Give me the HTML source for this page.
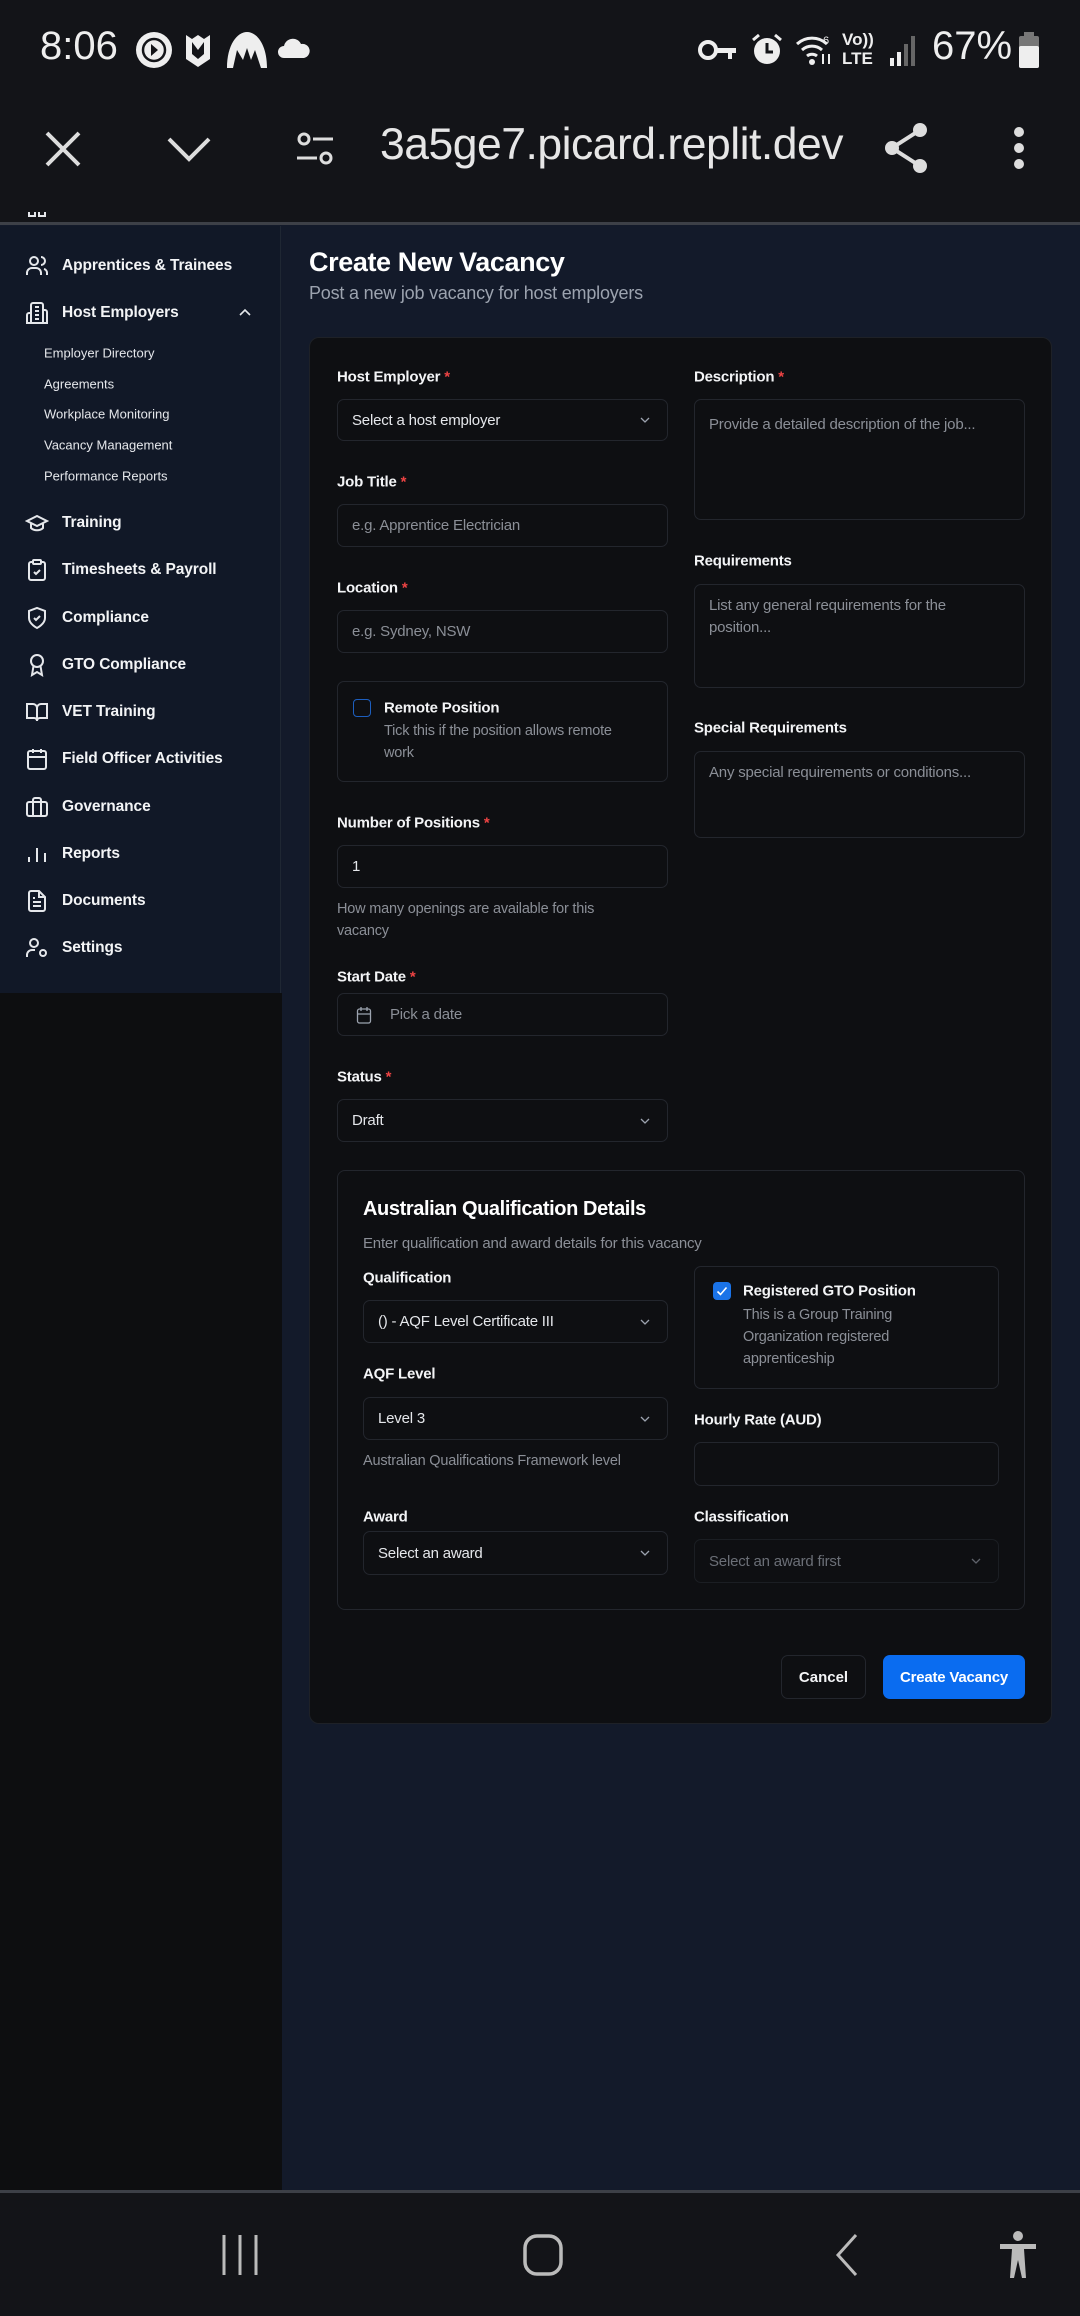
<!DOCTYPE html>
<html><head><meta charset="utf-8">
<style>
*{box-sizing:border-box;margin:0;padding:0}
body{width:1080px;height:2316px;background:#131a2a;font-family:"Liberation Sans",sans-serif;position:relative;overflow:hidden;color:#f3f4f6}
.a{position:absolute}
.status{left:0;top:0;width:1080px;height:223px;background:#131418}
.sep{left:0;width:1080px;height:3px;background:#3d4047}
.side{left:0;top:226px;width:281px;height:767px;background:#111827;border-right:1px solid #1f2733}
.below{left:0;top:993px;width:282px;height:1198px;background:#0d0e10}
.ni{position:absolute;left:62px;font-size:15.5px;font-weight:bold;color:#f3f4f6;letter-spacing:-0.1px;transform:translateY(-50%)}
.si{position:absolute;left:44px;font-size:13px;color:#e5e7eb;transform:translateY(-50%)}
.ic{position:absolute;left:25px;width:24px;height:24px;transform:translateY(-50%)}
.cv{position:absolute;left:238px;width:14px;height:14px;transform:translateY(-50%)}
.card{left:309px;top:337px;width:743px;height:1387px;background:#0e0f12;border:1px solid #1e2127;border-radius:10px}
.lb{position:absolute;font-size:15px;font-weight:bold;color:#f3f4f6;transform:translateY(-50%);letter-spacing:-0.2px}
.lb i{color:#ef4444;font-style:normal}
.in{position:absolute;border:1px solid #23262d;border-radius:7px;background:#0e0f12;font-size:15px;color:#e5e7eb;padding-left:14px;display:flex;align-items:center;letter-spacing:-0.2px}
.ph{color:#8b8f97}
.ta{align-items:flex-start;padding-top:14px;line-height:22px;padding-right:14px}
.help{position:absolute;font-size:14.5px;color:#8b8f97;line-height:22px;letter-spacing:-0.2px}
.chev{position:absolute;right:16px;top:50%;width:12px;height:12px;transform:translateY(-50%)}
</style></head><body>
<div class="a status"></div>
<div class="a" style="left:40px;top:24px;font-size:40px;color:#eee">8:06</div>
<svg class="a" style="left:134px;top:30px" width="40" height="40"><circle cx="20" cy="20" r="18" fill="#eee"/><circle cx="20" cy="20" r="11" fill="none" stroke="#131418" stroke-width="2.5"/><path d="M17 14l7 6-7 6z" fill="#131418"/></svg>
<svg class="a" style="left:184px;top:32px" width="28" height="36"><path d="M2 3l6 4 6-4 6 4 6-4v24l-12 8-12-8z" fill="#eee"/><path d="M8 10l6 8 6-8v12l-6 5-6-5z" fill="#131418"/></svg>
<svg class="a" style="left:225px;top:30px" width="44" height="40"><path d="M2 38 C2 15 12 2 22 2 C32 2 42 15 42 38 L36 38 L30 20 L26 30 L22 18 L18 30 L12 20 L8 38Z" fill="#eee"/></svg>
<svg class="a" style="left:278px;top:38px" width="32" height="22"><path d="M6 20a6 6 0 010-12 9 9 0 0117 -2 6 6 0 013 14z" fill="#eee"/></svg>
<svg class="a" style="left:698px;top:36px" width="40" height="28"><circle cx="10" cy="14" r="8" fill="none" stroke="#eee" stroke-width="4"/><path d="M18 12h20v5h-4v6h-4v-6h-12z" fill="#eee"/></svg>
<svg class="a" style="left:750px;top:32px" width="34" height="36"><circle cx="17" cy="19" r="13" fill="#eee"/><path d="M17 11v9h6" stroke="#131418" stroke-width="3" fill="none"/><path d="M3 8l6-5M31 8l-6-5" stroke="#eee" stroke-width="3"/></svg>
<svg class="a" style="left:795px;top:32px" width="40" height="36"><path d="M2 12a22 22 0 0130 0M7 18a15 15 0 0120 0M12 24a8 8 0 0110 0" stroke="#eee" stroke-width="3" fill="none"/><circle cx="17" cy="30" r="3" fill="#eee"/><text x="28" y="12" font-size="11" fill="#eee" font-family="Liberation Sans">6</text><path d="M28 22v10M34 22v10" stroke="#eee" stroke-width="2"/></svg>
<div class="a" style="left:842px;top:30px;font-size:17px;color:#eee;line-height:19px;font-weight:bold">Vo))<br>LTE</div>
<svg class="a" style="left:888px;top:34px" width="30" height="32"><rect x="2" y="24" width="4" height="8" fill="#eee"/><rect x="9" y="18" width="4" height="14" fill="#eee"/><rect x="16" y="10" width="4" height="22" fill="#666"/><rect x="23" y="2" width="4" height="30" fill="#666"/></svg>
<div class="a" style="left:932px;top:24px;font-size:40px;color:#eee">67%</div>
<svg class="a" style="left:1018px;top:32px" width="22" height="36"><rect x="6" y="0" width="10" height="4" fill="#777"/><rect x="1" y="4" width="20" height="32" rx="2" fill="#777"/><rect x="1" y="14" width="20" height="22" rx="2" fill="#eee"/></svg>

<svg class="a" style="left:44px;top:130px" width="38" height="38"><path d="M3 3l32 32M35 3L3 35" stroke="#ddd" stroke-width="4"/></svg>
<svg class="a" style="left:166px;top:136px" width="46" height="26"><path d="M3 3l20 20 20-20" stroke="#ddd" stroke-width="4" fill="none"/></svg>
<svg class="a" style="left:295px;top:131px" width="40" height="36"><circle cx="9" cy="8" r="5" stroke="#ddd" stroke-width="3" fill="none"/><path d="M18 8h20M2 27h20" stroke="#ddd" stroke-width="3"/><circle cx="31" cy="27" r="5" stroke="#ddd" stroke-width="3" fill="none"/></svg>
<div class="a" style="left:380px;top:120px;font-size:44.5px;color:#e6e6e6;letter-spacing:-0.5px">3a5ge7.picard.replit.dev</div>
<svg class="a" style="left:882px;top:120px" width="52" height="56"><circle cx="38" cy="10" r="7" fill="#ddd"/><circle cx="10" cy="28" r="7" fill="#ddd"/><circle cx="38" cy="46" r="7" fill="#ddd"/><path d="M38 10L10 28 38 46" stroke="#ddd" stroke-width="4" fill="none"/></svg>
<svg class="a" style="left:1010px;top:126px" width="18" height="46"><circle cx="9" cy="6" r="5" fill="#ddd"/><circle cx="9" cy="22" r="5" fill="#ddd"/><circle cx="9" cy="38" r="5" fill="#ddd"/></svg>
<div class="a sep" style="top:222px"></div>

<div class="a side">
<svg class="ic" style="top:-4px" viewBox="0 0 24 24"><path d="M4 2v4h6V2M14 2v4h6V2" stroke="#e5e7eb" stroke-width="2" fill="none"/></svg>
<svg class="ic" style="top:40px" viewBox="0 0 24 24" fill="none" stroke="#e5e7eb" stroke-width="2"><circle cx="9" cy="7" r="4"/><path d="M2 21v-2a5 5 0 015-5h4a5 5 0 015 5v2M16 3a4 4 0 010 8M22 21v-2a4 4 0 00-3-4"/></svg>
<div class="ni" style="top:40px">Apprentices &amp; Trainees</div>
<svg class="ic" style="top:87px" viewBox="0 0 24 24" fill="none" stroke="#e5e7eb" stroke-width="2"><path d="M6 22V4a2 2 0 012-2h8a2 2 0 012 2v18zM6 12H4a2 2 0 00-2 2v8h4M18 9h2a2 2 0 012 2v11h-4M10 6h4M10 10h4M10 14h4M10 18h4"/></svg>
<div class="ni" style="top:87px">Host Employers</div>
<svg class="cv" style="top:87px" viewBox="0 0 14 14"><path d="M2 9l5-5 5 5" stroke="#e5e7eb" stroke-width="1.6" fill="none"/></svg>
<div class="si" style="top:127px">Employer Directory</div>
<div class="si" style="top:158px">Agreements</div>
<div class="si" style="top:188px">Workplace Monitoring</div>
<div class="si" style="top:219px">Vacancy Management</div>
<div class="si" style="top:250px">Performance Reports</div>
<svg class="ic" style="top:297px" viewBox="0 0 24 24" fill="none" stroke="#e5e7eb" stroke-width="2"><path d="M22 10L12 5 2 10l10 5 10-5zM6 12v5c3 3 9 3 12 0v-5"/></svg>
<div class="ni" style="top:297px">Training</div>
<svg class="ic" style="top:344px" viewBox="0 0 24 24" fill="none" stroke="#e5e7eb" stroke-width="2"><rect x="8" y="2" width="8" height="4" rx="1"/><path d="M16 4h2a2 2 0 012 2v14a2 2 0 01-2 2H6a2 2 0 01-2-2V6a2 2 0 012-2h2M9 14l2 2 4-4"/></svg>
<div class="ni" style="top:344px">Timesheets &amp; Payroll</div>
<svg class="ic" style="top:392px" viewBox="0 0 24 24" fill="none" stroke="#e5e7eb" stroke-width="2"><path d="M12 22s8-4 8-10V5l-8-3-8 3v7c0 6 8 10 8 10zM9 12l2 2 4-4"/></svg>
<div class="ni" style="top:392px">Compliance</div>
<svg class="ic" style="top:439px" viewBox="0 0 24 24" fill="none" stroke="#e5e7eb" stroke-width="2"><circle cx="12" cy="8" r="6"/><path d="M8.5 13L7 22l5-3 5 3-1.5-9"/></svg>
<div class="ni" style="top:439px">GTO Compliance</div>
<svg class="ic" style="top:486px" viewBox="0 0 24 24" fill="none" stroke="#e5e7eb" stroke-width="2"><path d="M2 4h6a4 4 0 014 4v13a3 3 0 00-3-3H2zM22 4h-6a4 4 0 00-4 4v13a3 3 0 013-3h7z"/></svg>
<div class="ni" style="top:486px">VET Training</div>
<svg class="ic" style="top:533px" viewBox="0 0 24 24" fill="none" stroke="#e5e7eb" stroke-width="2"><rect x="3" y="4" width="18" height="18" rx="2"/><path d="M16 2v4M8 2v4M3 10h18"/></svg>
<div class="ni" style="top:533px">Field Officer Activities</div>
<svg class="ic" style="top:581px" viewBox="0 0 24 24" fill="none" stroke="#e5e7eb" stroke-width="2"><rect x="2" y="7" width="20" height="14" rx="2"/><path d="M16 21V5a2 2 0 00-2-2h-4a2 2 0 00-2 2v16"/></svg>
<div class="ni" style="top:581px">Governance</div>
<svg class="ic" style="top:628px" viewBox="0 0 24 24" fill="none" stroke="#e5e7eb" stroke-width="2"><path d="M4 20v-5M12 20V6M20 20v-9"/></svg>
<div class="ni" style="top:628px">Reports</div>
<svg class="ic" style="top:675px" viewBox="0 0 24 24" fill="none" stroke="#e5e7eb" stroke-width="2"><path d="M14 2H6a2 2 0 00-2 2v16a2 2 0 002 2h12a2 2 0 002-2V8zM14 2v6h6M8 13h8M8 17h8M8 9h2"/></svg>
<div class="ni" style="top:675px">Documents</div>
<svg class="ic" style="top:722px" viewBox="0 0 24 24" fill="none" stroke="#e5e7eb" stroke-width="2"><circle cx="9" cy="7" r="4"/><path d="M2 21v-2a5 5 0 015-5h3"/><circle cx="18" cy="17" r="3"/></svg>
<div class="ni" style="top:722px">Settings</div>
</div>
<div class="a below"></div>

<div class="a" style="left:309px;top:247px;font-size:27px;font-weight:bold;color:#fff;letter-spacing:-0.4px">Create New Vacancy</div>
<div class="a" style="left:309px;top:283px;font-size:18px;color:#9ca3af;letter-spacing:-0.2px">Post a new job vacancy for host employers</div>

<div class="a card"></div>
<div class="lb" style="left:337px;top:377px">Host Employer <i>*</i></div>
<div class="in" style="left:337px;top:399px;width:331px;height:42px">Select a host employer<svg class="chev" viewBox="0 0 12 12"><path d="M2 4l4 4 4-4" stroke="#9ca3af" stroke-width="1.3" fill="none"/></svg></div>
<div class="lb" style="left:337px;top:482px">Job Title <i>*</i></div>
<div class="in ph" style="left:337px;top:504px;width:331px;height:43px">e.g. Apprentice Electrician</div>
<div class="lb" style="left:337px;top:588px">Location <i>*</i></div>
<div class="in ph" style="left:337px;top:610px;width:331px;height:43px">e.g. Sydney, NSW</div>
<div class="a" style="left:337px;top:681px;width:331px;height:101px;border:1px solid #23262d;border-radius:7px"></div>
<div class="a" style="left:353px;top:699px;width:18px;height:18px;border:1.5px solid #1d5fbf;border-radius:4px"></div>
<div class="lb" style="left:384px;top:708px">Remote Position</div>
<div class="help" style="left:384px;top:720px;width:250px">Tick this if the position allows remote work</div>
<div class="lb" style="left:337px;top:823px">Number of Positions <i>*</i></div>
<div class="in" style="left:337px;top:845px;width:331px;height:43px">1</div>
<div class="help" style="left:337px;top:898px;width:300px">How many openings are available for this vacancy</div>
<div class="lb" style="left:337px;top:977px">Start Date <i>*</i></div>
<div class="in ph" style="left:337px;top:993px;width:331px;height:43px;padding-left:18px"><svg width="16" height="18" viewBox="0 0 16 18" style="margin-right:18px"><rect x="1.5" y="3" width="13" height="14" rx="2" fill="none" stroke="#9ca3af" stroke-width="1.3"/><path d="M5 1v4M11 1v4M1.5 8h13" stroke="#9ca3af" stroke-width="1.3"/></svg>Pick a date</div>
<div class="lb" style="left:337px;top:1077px">Status <i>*</i></div>
<div class="in" style="left:337px;top:1099px;width:331px;height:43px">Draft<svg class="chev" viewBox="0 0 12 12"><path d="M2 4l4 4 4-4" stroke="#9ca3af" stroke-width="1.3" fill="none"/></svg></div>

<div class="lb" style="left:694px;top:377px">Description <i>*</i></div>
<div class="in ph ta" style="left:694px;top:399px;width:331px;height:121px">Provide a detailed description of the job...</div>
<div class="lb" style="left:694px;top:561px">Requirements</div>
<div class="in ph ta" style="left:694px;top:584px;width:331px;height:104px;padding-top:10px">List any general requirements for the position...</div>
<div class="lb" style="left:694px;top:728px">Special Requirements</div>
<div class="in ph ta" style="left:694px;top:751px;width:331px;height:87px;padding-top:10px">Any special requirements or conditions...</div>

<div class="a" style="left:337px;top:1170px;width:688px;height:440px;border:1px solid #23262d;border-radius:8px"></div>
<div class="a" style="left:363px;top:1198px;font-size:20px;font-weight:bold;color:#fff;letter-spacing:-0.4px">Australian Qualification Details</div>
<div class="a" style="left:363px;top:1235px;font-size:15px;color:#8b8f97;letter-spacing:-0.2px">Enter qualification and award details for this vacancy</div>
<div class="lb" style="left:363px;top:1278px">Qualification</div>
<div class="in" style="left:363px;top:1300px;width:305px;height:43px">() - AQF Level Certificate III<svg class="chev" viewBox="0 0 12 12"><path d="M2 4l4 4 4-4" stroke="#9ca3af" stroke-width="1.3" fill="none"/></svg></div>
<div class="lb" style="left:363px;top:1374px">AQF Level</div>
<div class="in" style="left:363px;top:1397px;width:305px;height:43px">Level 3<svg class="chev" viewBox="0 0 12 12"><path d="M2 4l4 4 4-4" stroke="#9ca3af" stroke-width="1.3" fill="none"/></svg></div>
<div class="help" style="left:363px;top:1450px">Australian Qualifications Framework level</div>
<div class="lb" style="left:363px;top:1517px">Award</div>
<div class="in" style="left:363px;top:1531px;width:305px;height:44px">Select an award<svg class="chev" viewBox="0 0 12 12"><path d="M2 4l4 4 4-4" stroke="#9ca3af" stroke-width="1.3" fill="none"/></svg></div>

<div class="a" style="left:694px;top:1266px;width:305px;height:123px;border:1px solid #23262d;border-radius:7px"></div>
<div class="a" style="left:713px;top:1282px;width:18px;height:18px;background:#1a73e8;border-radius:4px"><svg width="18" height="18" viewBox="0 0 18 18"><path d="M4.5 9.5l3 3 6-7" stroke="#fff" stroke-width="1.6" fill="none"/></svg></div>
<div class="lb" style="left:743px;top:1291px">Registered GTO Position</div>
<div class="help" style="left:743px;top:1304px;width:185px">This is a Group Training Organization registered apprenticeship</div>
<div class="lb" style="left:694px;top:1420px">Hourly Rate (AUD)</div>
<div class="in" style="left:694px;top:1442px;width:305px;height:44px"></div>
<div class="lb" style="left:694px;top:1517px">Classification</div>
<div class="in" style="left:694px;top:1539px;width:305px;height:44px;color:#6b6f77;border-color:#1b1e23">Select an award first<svg class="chev" viewBox="0 0 12 12"><path d="M2 4l4 4 4-4" stroke="#5f636b" stroke-width="1.3" fill="none"/></svg></div>

<div class="a" style="left:781px;top:1655px;width:85px;height:44px;border:1px solid #23262d;border-radius:7px;display:flex;align-items:center;justify-content:center;font-size:15px;font-weight:bold;color:#f3f4f6">Cancel</div>
<div class="a" style="left:883px;top:1655px;width:142px;height:44px;background:#0a6cf0;border-radius:7px;display:flex;align-items:center;justify-content:center;font-size:15px;font-weight:bold;color:#fff;letter-spacing:-0.2px">Create Vacancy</div>

<div class="a sep" style="top:2190px"></div>
<div class="a" style="left:0;top:2193px;width:1080px;height:123px;background:#131418"></div>
<svg class="a" style="left:220px;top:2233px" width="44" height="44"><path d="M4 2v40M20 2v40M36 2v40" stroke="#bbb" stroke-width="3"/></svg>
<svg class="a" style="left:522px;top:2233px" width="44" height="44"><rect x="3" y="3" width="36" height="38" rx="12" fill="none" stroke="#bbb" stroke-width="3.5"/></svg>
<svg class="a" style="left:832px;top:2233px" width="30" height="44"><path d="M24 2L6 22l18 20" stroke="#bbb" stroke-width="3" fill="none"/></svg>
<svg class="a" style="left:998px;top:2230px" width="40" height="50"><circle cx="20" cy="6" r="5" fill="#bbb"/><path d="M2 14h36v5H26l2 29h-4l-4-18-4 18h-4l2-29H2z" fill="#bbb"/></svg>
</body></html>
